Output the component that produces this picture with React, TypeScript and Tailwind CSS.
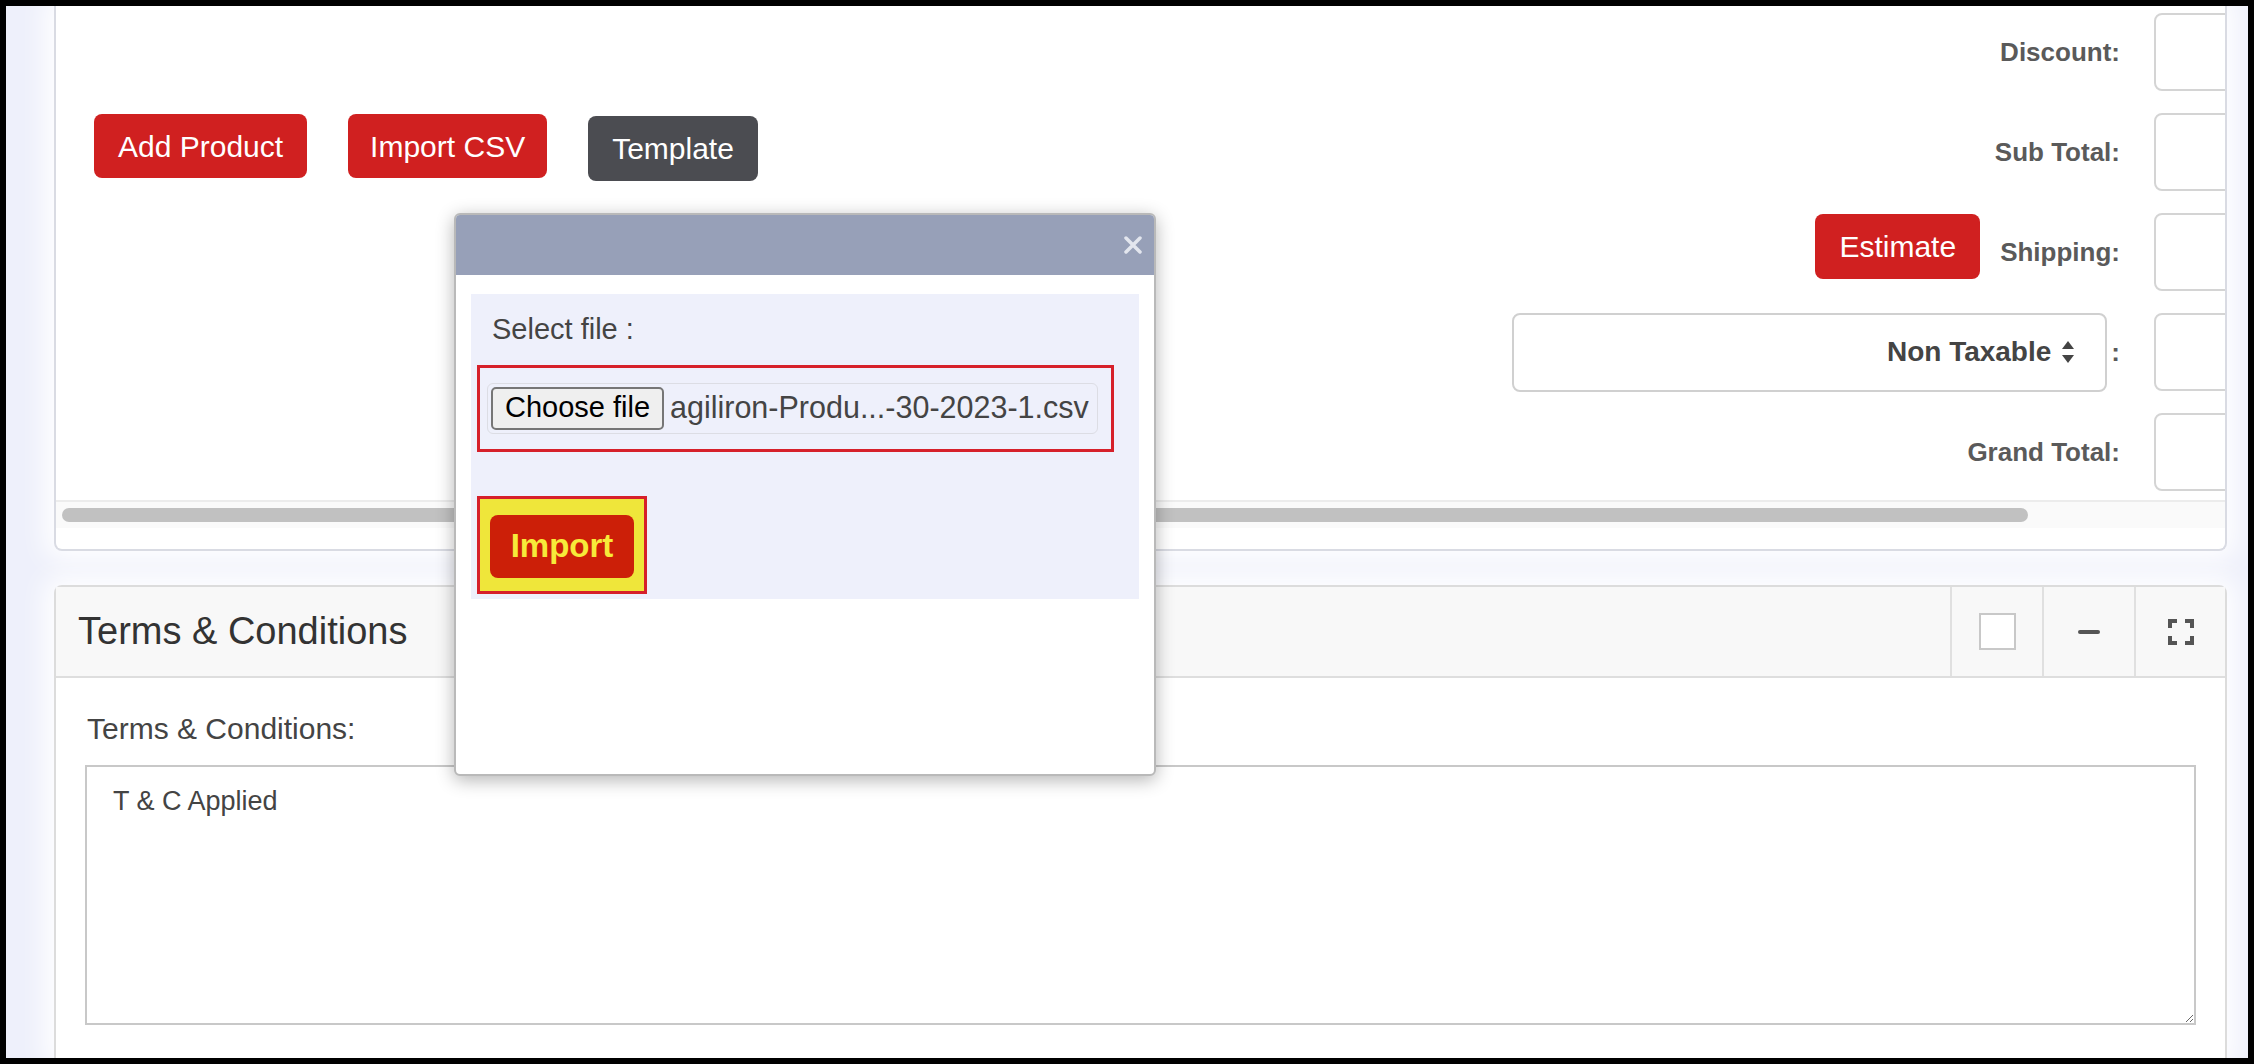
import React from 'react';

const font = { fontFamily: '"Liberation Sans", Arial, sans-serif' };

function TotalRow({ label, children }: { label?: string; children?: React.ReactNode }) {
  return (
    <div className="flex h-[78px] items-center justify-end">
      {children}
      {label && <span className="text-[26px] font-bold text-[#5a5a5a]">{label}</span>}
      <div className="ml-[34px] h-[78px] w-[112px] shrink-0 rounded-[8px] border-2 border-[#d4d4d4] bg-white" />
    </div>
  );
}

function ExpandIcon() {
  return (
    <svg width="26" height="26" viewBox="0 0 26 26" fill="none" stroke="#555" strokeWidth="4">
      <path d="M2 9V2h7M17 2h7v7M24 17v7h-7M9 24H2v-7" />
    </svg>
  );
}

function SortArrows() {
  return (
    <svg width="14" height="24" viewBox="0 0 14 24" fill="#444">
      <path d="M7 1l6 8H1z" />
      <path d="M7 23l6-8H1z" />
    </svg>
  );
}

export default function App() {
  return (
    <div className="h-[1064px] w-[2254px] overflow-hidden bg-black p-[6px]" style={font}>
      <div className="relative flex h-full flex-col overflow-hidden bg-[#eef0fb] pl-[48px] pr-[21px]">
        {/* products card, scrolled so its top is out of view */}
        <div className="flex h-[545px] shrink-0 flex-col rounded-b-[8px] border-x-2 border-b-2 border-[#d9dbe3] bg-white shadow-[0_0_26px_10px_rgba(255,255,255,0.95)]">
          <div className="h-[494px] overflow-hidden">
            <div className="flex w-[2210px] justify-between">
              <div className="flex items-start gap-[41px] pl-[38px] pt-[108px]">
                <button className="h-[64px] rounded-[8px] bg-[#d02020] px-[24px] text-[30px] text-white">Add Product</button>
                <button className="h-[64px] rounded-[8px] bg-[#d02020] px-[22px] text-[30px] text-white">Import CSV</button>
                <button className="mt-[2px] h-[65px] rounded-[8px] bg-[#4b4c51] px-[24px] text-[30px] text-white">Template</button>
              </div>
              <div className="flex flex-col gap-[22px] pt-[7px]">
                <TotalRow label="Discount:" />
                <TotalRow label="Sub Total:" />
                <TotalRow label="Shipping:">
                  <button className="mb-[11px] mr-[20px] h-[65px] rounded-[8px] bg-[#d02020] px-[24px] text-[30px] text-white">Estimate</button>
                </TotalRow>
                <TotalRow>
                  <div className="flex h-[79px] w-[595px] items-center justify-end gap-[10px] rounded-[8px] border-2 border-[#d0d0d0] bg-white pr-[30px]">
                    <span className="text-[28px] font-bold text-[#444]">Non Taxable</span>
                    <SortArrows />
                  </div>
                  <span className="ml-[4px] text-[26px] font-bold text-[#5a5a5a]">:</span>
                </TotalRow>
                <TotalRow label="Grand Total:" />
              </div>
            </div>
          </div>
          <div className="flex h-[28px] items-center border-t-2 border-[#ececec] bg-[#fafafa] px-[6px]">
            <div className="h-[14px] w-[1966px] rounded-full bg-[#c1c1c1]" />
          </div>
        </div>

        {/* terms card */}
        <div className="mt-[34px] flex flex-1 flex-col rounded-t-[8px] border-x-2 border-t-2 border-[#dcdcdc] bg-white shadow-[0_0_26px_10px_rgba(255,255,255,0.95)]">
          <div className="flex h-[91px] items-stretch border-b-2 border-[#dedede] bg-[#f8f8f8]">
            <div className="flex flex-1 items-center pl-[22px] text-[38px] text-[#333]">Terms &amp; Conditions</div>
            <div className="flex w-[92px] items-center justify-center border-l-2 border-[#e0e0e0]">
              <div className="h-[37px] w-[37px] border-2 border-[#c8c8c8] bg-white" />
            </div>
            <div className="flex w-[92px] items-center justify-center border-l-2 border-[#e0e0e0]">
              <div className="h-[4px] w-[22px] rounded-full bg-[#555]" />
            </div>
            <div className="flex w-[91px] items-center justify-center border-l-2 border-[#e0e0e0]">
              <ExpandIcon />
            </div>
          </div>
          <div className="px-[29px] pt-[28px]">
            <div className="pl-[2px] text-[30px] text-[#444]">Terms &amp; Conditions:</div>
            <textarea
              readOnly
              defaultValue="T & C Applied"
              className="mt-[14px] block h-[260px] w-full border-2 border-[#c8c8c8] px-[26px] py-[14px] text-[27px] text-[#444] outline-none"
              style={font}
            />
          </div>
        </div>

        {/* import csv modal */}
        <div className="absolute left-[448px] top-[207px] flex h-[563px] w-[702px] flex-col overflow-hidden rounded-[6px] border-2 border-[#b9b9b9] bg-white shadow-[0_4px_18px_rgba(0,0,0,0.3)]">
          <div className="flex h-[60px] shrink-0 items-center justify-end bg-[#97a0b8] pr-[12px]">
            <svg width="18" height="18" viewBox="0 0 18 18" stroke="#e3e6ee" strokeWidth="3.5" strokeLinecap="round">
              <path d="M2 2l14 14M16 2L2 16" />
            </svg>
          </div>
          <div className="px-[15px] pt-[19px]">
            <div className="h-[305px] bg-[#eef0fb] pl-[6px] pr-[25px] pt-[14px]">
              <div className="pl-[15px] text-[29px] text-[#444]">Select file :</div>
              <div className="mt-[13px] border-[3px] border-[#d6202a] py-[15px] pl-[7px] pr-[13px]">
                <div className="flex h-[51px] items-center rounded-[6px] border border-[#dcdde4] px-[3px]">
                  <div className="flex h-[43px] w-[173px] items-center justify-center rounded-[5px] border-2 border-[#767676] bg-[#efefef] text-[29px] text-black">
                    Choose file
                  </div>
                  <span className="ml-[6px] text-[30.5px] text-[#444]">agiliron-Produ...-30-2023-1.csv</span>
                </div>
              </div>
              <div className="mt-[44px] inline-flex border-[3px] border-[#d6202a] bg-[#efe63a] px-[10px] pb-[13px] pt-[16px]">
                <button className="h-[63px] w-[144px] rounded-[8px] bg-[#cc1f08] text-[33px] font-bold text-[#f7ea3a]">Import</button>
              </div>
            </div>
          </div>
        </div>
      </div>
    </div>
  );
}
